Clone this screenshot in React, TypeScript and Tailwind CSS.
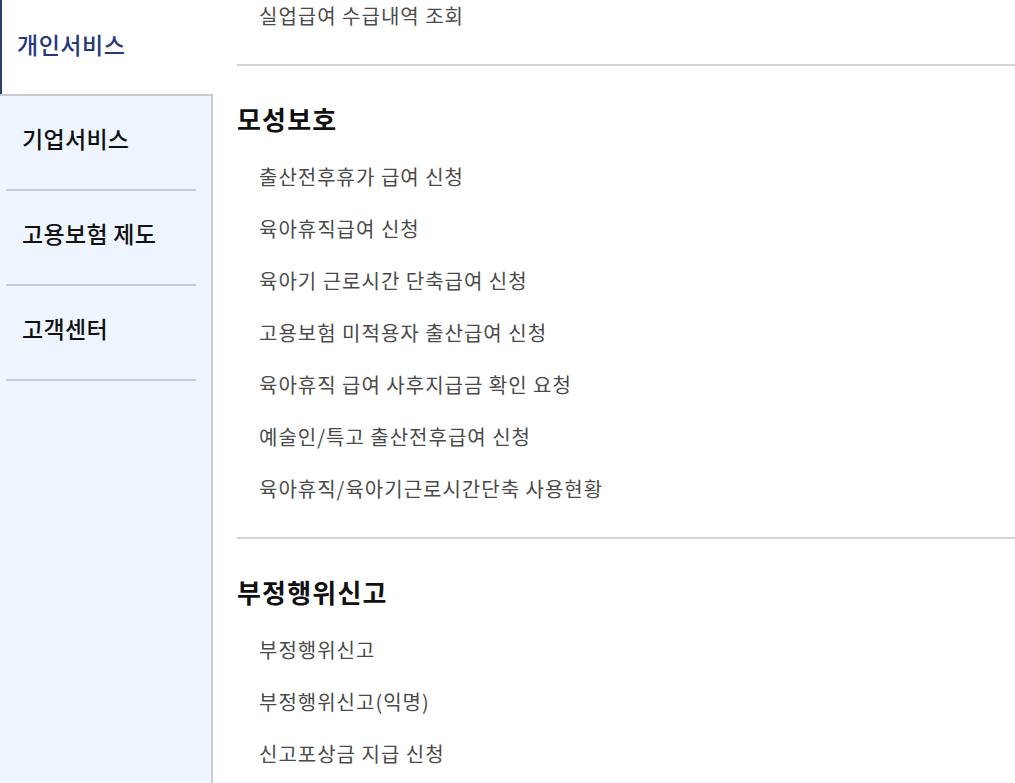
import React from "react";

const font = { fontFamily: '"Noto Sans CJK KR", "Noto Sans", sans-serif' };

function Section({ title, items, last }: { title?: string; items: string[]; last?: boolean }) {
  return (
    <div className={last ? "" : "border-b-2 border-[#d3d3d3] pb-[22px]"}>
      {title && (
        <h2 className="pt-[37px] pb-[16px] text-[26px] font-bold leading-[32px] text-[#111] tracking-[1.2px]">{title}</h2>
      )}
      <ul>
        {items.map((t) => (
          <li key={t} className="h-[52px] flex items-center pl-[22px] text-[20px] text-[#4a4a4a] tracking-[1px]">
            {t}
          </li>
        ))}
      </ul>
    </div>
  );
}

export default function App() {
  return (
    <div className="w-[1015px] h-[783px] overflow-hidden flex bg-white" style={font}>
      <aside className="w-[213px] shrink-0 flex flex-col">
        <div className="h-[94px] bg-white border-l-2 border-[#2b3e6d] flex items-center pl-[15px] pb-[6px]">
          <span className="text-[23px] font-medium text-[#25397a] tracking-[0.5px]">개인서비스</span>
        </div>
        <div className="flex-1 bg-[#eef5fe] border-t-2 border-r-2 border-[#c9cbcf]">
          {["기업서비스", "고용보험 제도", "고객센터"].map((t) => (
            <div key={t} className="ml-[6px] mr-[15px] h-[95px] border-b-2 border-[#c9cbd0] flex items-center pl-[16px] pb-[8px]">
              <span className="text-[23px] font-medium text-[#111] tracking-[0.3px]">{t}</span>
            </div>
          ))}
        </div>
      </aside>
      <main className="flex-1 pl-[24px] -mt-[10px]">
        <Section items={["실업급여 수급내역 조회"]} />
        <Section
          title="모성보호"
          items={[
            "출산전후휴가 급여 신청",
            "육아휴직급여 신청",
            "육아기 근로시간 단축급여 신청",
            "고용보험 미적용자 출산급여 신청",
            "육아휴직 급여 사후지급금 확인 요청",
            "예술인/특고 출산전후급여 신청",
            "육아휴직/육아기근로시간단축 사용현황",
          ]}
        />
        <Section title="부정행위신고" items={["부정행위신고", "부정행위신고(익명)", "신고포상금 지급 신청"]} last />
      </main>
    </div>
  );
}
